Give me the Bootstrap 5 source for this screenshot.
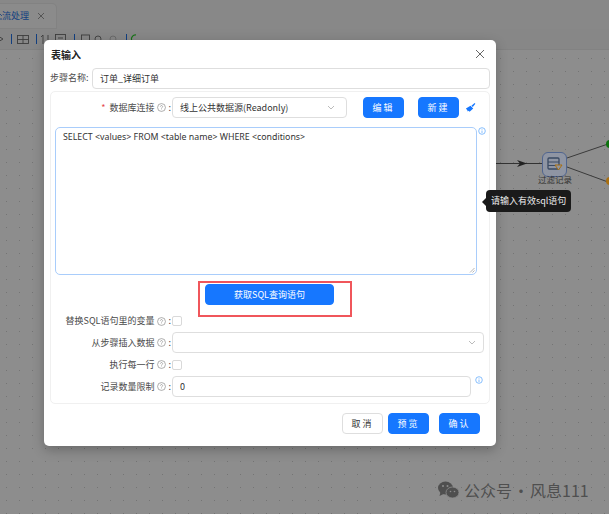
<!DOCTYPE html>
<html lang="zh"><head><meta charset="utf-8">
<link href="https://cdn.jsdelivr.net/npm/bootstrap@5.3.0/dist/css/bootstrap.min.css" rel="stylesheet">
<style>
html,body{width:609px;height:514px;overflow:hidden;margin:0}
body{font-family:"Noto Sans CJK SC","Liberation Sans",sans-serif;font-size:9px;color:#333;background:#8c8c8c}
.stage{position:relative;width:609px;height:514px;background-color:#8d8d8d;background-image:radial-gradient(#747474 .6px,transparent .8px);background-size:13px 13px;overflow:hidden}
.topbar{height:3px;background:#888}
.tabs{height:26px;background:#888;color:#123f80}
.tabs .tab{width:57px;height:26px;border:1px solid #828282;border-left:0;border-radius:0 5px 0 0;background:#8b8b8b;overflow:hidden}
.tools{height:21px;background:#878787;border-bottom:1px solid #828282}
.modal-box{position:absolute;left:44px;top:40px;width:452px;height:406px;background:#fff;border-radius:5px;padding:0 6px;box-shadow:0 4px 12px rgba(0,0,0,.25)}
.title{height:28px;font-size:10px;font-weight:700;color:#222;padding-top:7px;padding-left:1px}
.close-x{width:10px;height:10px;margin:2px 5px 0 0}
.fld{border:1px solid #dedede;border-radius:4px;background:#fff;height:21px;padding:0 7px;font-size:9px;color:#333;flex:none}
.lab{color:#4a4a4a;white-space:nowrap;font-size:9px}
.q{width:9px;height:9px;margin:0 2px 0 3px;flex:none}
.name-row{height:21px;margin-bottom:2px}
.name-row .lab{width:42px;flex:none;margin-top:-2px}
.panel{border:1px solid #f0f0f0;border-radius:5px;height:313px;padding:5px 0 0 4px}
.conn{height:21px;margin-bottom:9px}
.req{color:#e5484d;margin-right:4px}
.left{width:117px;flex:none;padding-right:1px}
.btn-x{--bs-btn-padding-y:0;--bs-btn-padding-x:0;--bs-btn-font-size:9px;--bs-btn-border-radius:4px;--bs-btn-bg:#1677ff;--bs-btn-border-color:#1677ff;height:21px;width:41px;letter-spacing:2px;line-height:1;flex:none}
.sql{width:422px;height:148px;border:1px solid #a9cdfb;border-radius:5px;font-family:"Noto Sans","Liberation Sans",sans-serif;font-size:8.8px;padding:3px 7px;color:#333;position:relative;flex:none}
.grip{position:absolute;right:1px;bottom:1px;width:6px;height:6px}
.hl{width:154px;height:36px;border:2px solid #f0565b;padding:1px 0 0 5px;margin:6px 0 0 143px}
.hl .btn{--bs-btn-bg:#1677ff;--bs-btn-border-color:#1677ff;--bs-btn-font-size:9px;--bs-btn-padding-y:0;--bs-btn-border-radius:4px;width:129px;height:21px;line-height:1}
.rc{height:10px;margin-top:-1px}
.rf{height:21px;margin-top:6px}
.cb{width:10px;height:10px;border:1px solid #d9d9d9;border-radius:2px;flex:none}
.rr{height:11px;margin-top:6px}
.btn-c{--bs-btn-padding-y:0;--bs-btn-padding-x:0;--bs-btn-font-size:9px;--bs-btn-border-radius:4px;--bs-btn-border-color:#dedede;--bs-btn-color:#333;height:21px;width:41px;letter-spacing:2px;line-height:1}
.node{position:absolute;left:542px;top:152px;width:25px;height:25px;background:#8f95a3;border:1px solid #50658f;border-radius:6px}
.nlabel{position:absolute;left:538px;top:173px;font-size:8.5px;color:#333}
.tip{position:absolute;left:486px;top:190px;height:22px;width:85px;background:#1a1a1a;color:#eee;font-size:9px;border-radius:4px;line-height:21px;padding-left:5px;white-space:nowrap}
.tip:before{content:"";position:absolute;left:-4px;top:8px;border:4px solid transparent;border-left:0;border-right-color:#1a1a1a}
.lines{position:absolute;left:0;top:0}
.wm{position:absolute;left:464px;top:479px;font-size:16px;color:#4f4f4f;line-height:22px;white-space:nowrap}
.wm .dot{margin:0 1px}
</style></head><body>
<div class="stage">
<div class="topbar"></div>
<div class="tabs d-flex"><div class="tab d-flex align-items-center justify-content-between"><span class="d-flex align-items-center text-nowrap"><svg class="flex-none" width="2" height="9" viewBox="0 0 2 9"><path d="M0 2l2 2M0 7h2" stroke="#123f80" stroke-width=".8"/></svg>流处理</span><svg style="margin-right:11px" width="8" height="8" viewBox="0 0 8 8"><path d="M1 1l6 6M7 1L1 7" stroke="#555"/></svg></div></div>
<div class="tools"><svg class="d-block" width="609" height="20" viewBox="0 30 609 20"><g fill="none" stroke="#3d3d3d" stroke-width=".9"><path d="M-2 37l5 3-5 3"/><rect x="17.500" y="36.500" width="11" height="8"/><path d="M17.500 40.500h11M23 36.500v8"/><path d="M43 45v-9l-2 2M48 36v9l2-2"/><rect x="55.500" y="35.500" width="10" height="9"/><path d="M58 39h5"/><rect x="81.500" y="36" width="8" height="8"/><circle cx="98" cy="40" r="3"/><circle cx="113" cy="40" r="3" stroke="#666"/></g><path d="M11.500 35v10M36.500 35v10M74.500 35v10M126.500 35v10" stroke="#123f80"/><path d="M136 36a4 4 0 1 0 2 7" fill="none" stroke="#157315" stroke-width="1.200"/></svg></div>
<svg class="lines" width="609" height="514"><path d="M496 163.500H542" stroke="#333" fill="none"/><path d="M527 163.500l-10-3.500 3 3.500-3 3.500z" fill="#222"/><path d="M567 158L608 144M567 167L608 182" stroke="#3b3b3b" fill="none"/><circle cx="610" cy="144" r="4" fill="#0d730d"/><circle cx="610" cy="181" r="4" fill="#a86f10"/></svg>
<div class="node"><svg class="d-block" width="23" height="23" viewBox="0 0 23 23"><rect x="5" y="5" width="11" height="11" rx="1" fill="none" stroke="#3a4a63" stroke-width="1.300"/><path d="M5 9h11M5 12.500h11" stroke="#3a4a63"/><path d="M12 12h7l-3.500 5z" fill="#8f95a3" stroke="#a86f10"/></svg></div>
<div class="nlabel">过滤记录</div>
<div class="wm"><svg class="position-absolute" style="left:-27px;top:2px" width="23" height="18" viewBox="0 0 22 18"><ellipse cx="8" cy="7" rx="7.500" ry="6.500" fill="#4f4f4f"/><path d="M3 11l-1 4 4-2z" fill="#4f4f4f"/><ellipse cx="15" cy="11.500" rx="6.500" ry="5.500" fill="#4f4f4f" stroke="#8d8d8d" stroke-width=".8"/><circle cx="5.500" cy="5" r="1" fill="#8d8d8d"/><circle cx="10" cy="5" r="1" fill="#8d8d8d"/><circle cx="13" cy="10.500" r=".8" fill="#8d8d8d"/><circle cx="17" cy="10.500" r=".8" fill="#8d8d8d"/></svg>公众号<span class="dot">·</span>风息111</div>

<div class="modal-box">
<div class="title d-flex justify-content-between align-items-start"><span>表输入</span><svg class="close-x" viewBox="0 0 10 10"><path d="M1 1l8 8M9 1l-8 8" stroke="#666"/></svg></div>
<div class="name-row d-flex align-items-center"><span class="lab">步骤名称:</span><div class="fld flex-grow-1 d-flex align-items-center">订单_详细订单</div></div>
<div class="panel">
 <div class="conn d-flex align-items-center">
  <div class="left d-flex align-items-center justify-content-end"><span class="req">*</span><span class="lab">数据库连接</span><svg class="q" viewBox="0 0 8 8"><circle cx="4" cy="4" r="3.500" fill="none" stroke="#888" stroke-width=".6"/><path d="M3 3.200a1 1 0 1 1 1.500.9c-.4.2-.5.4-.5.8M4 5.900v.4" fill="none" stroke="#888" stroke-width=".6"/></svg><span class="lab">:</span></div>
  <div class="fld d-flex align-items-center justify-content-between" style="width:175px"><span class="text-nowrap">线上公共数据源(Readonly)</span><svg width="8" height="5" viewBox="0 0 8 5" class="me-1"><path d="M1 1l3 3 3-3" fill="none" stroke="#bbb"/></svg></div>
  <button class="btn btn-primary btn-x" style="margin-left:16px">编辑</button>
  <button class="btn btn-primary btn-x" style="margin-left:14px">新建</button>
  <svg style="margin-left:6px" width="11" height="11" viewBox="0 0 12 12"><path d="M1 7l5-3 3 3-4 3.500-1-1-1 .8-.5-1.300z" fill="#1677ff"/><path d="M7 4l3.500-3 .8.8L8.500 5.500z" fill="#1677ff"/></svg>
 </div>
 <div class="d-flex align-items-start">
  <div class="sql">SELECT &lt;values&gt; FROM &lt;table name&gt; WHERE &lt;conditions&gt;<svg class="grip" viewBox="0 0 6 6"><path d="M5.500 1L1 5.500M5.500 3.500L3.500 5.500" stroke="#888" stroke-width=".6"/></svg></div>
  <svg class="flex-none" style="margin-left:1px" width="8" height="8" viewBox="0 0 8 8"><circle cx="4" cy="4" r="3.300" fill="none" stroke="#6aaefc" stroke-width=".8"/><path d="M4 3.500v2.500M4 2v.6" stroke="#6aaefc" stroke-width=".8"/></svg>
 </div>
 <div class="hl"><button class="btn btn-primary d-block">获取SQL查询语句</button></div>
 <div class="rc d-flex align-items-center">
  <div class="left d-flex align-items-center justify-content-end"><span class="lab">替换SQL语句里的变量</span><svg class="q" viewBox="0 0 8 8"><circle cx="4" cy="4" r="3.500" fill="none" stroke="#888" stroke-width=".6"/><path d="M3 3.200a1 1 0 1 1 1.500.9c-.4.2-.5.4-.5.8M4 5.900v.4" fill="none" stroke="#888" stroke-width=".6"/></svg><span class="lab">:</span></div>
  <div class="cb"></div>
 </div>
 <div class="rf d-flex align-items-center">
  <div class="left d-flex align-items-center justify-content-end"><span class="lab">从步骤插入数据</span><svg class="q" viewBox="0 0 8 8"><circle cx="4" cy="4" r="3.500" fill="none" stroke="#888" stroke-width=".6"/><path d="M3 3.200a1 1 0 1 1 1.500.9c-.4.2-.5.4-.5.8M4 5.900v.4" fill="none" stroke="#888" stroke-width=".6"/></svg><span class="lab">:</span></div>
  <div class="fld d-flex align-items-center justify-content-end" style="width:312px"><svg width="8" height="5" viewBox="0 0 8 5"><path d="M1 1l3 3 3-3" fill="none" stroke="#bbb"/></svg></div>
 </div>
 <div class="rr d-flex align-items-center">
  <div class="left d-flex align-items-center justify-content-end"><span class="lab">执行每一行</span><svg class="q" viewBox="0 0 8 8"><circle cx="4" cy="4" r="3.500" fill="none" stroke="#888" stroke-width=".6"/><path d="M3 3.200a1 1 0 1 1 1.500.9c-.4.2-.5.4-.5.8M4 5.900v.4" fill="none" stroke="#888" stroke-width=".6"/></svg><span class="lab">:</span></div>
  <div class="cb"></div>
 </div>
 <div class="rf d-flex align-items-center">
  <div class="left d-flex align-items-center justify-content-end"><span class="lab">记录数量限制</span><svg class="q" viewBox="0 0 8 8"><circle cx="4" cy="4" r="3.500" fill="none" stroke="#888" stroke-width=".6"/><path d="M3 3.200a1 1 0 1 1 1.500.9c-.4.2-.5.4-.5.8M4 5.900v.4" fill="none" stroke="#888" stroke-width=".6"/></svg><span class="lab">:</span></div>
  <div class="fld d-flex align-items-center" style="width:299px">0</div>
  <svg class="ms-1 align-self-start" width="8" height="8" viewBox="0 0 8 8"><circle cx="4" cy="4" r="3.300" fill="none" stroke="#6aaefc" stroke-width=".8"/><path d="M4 3.500v2.500M4 2v.6" stroke="#6aaefc" stroke-width=".8"/></svg>
 </div>
</div>
<div class="d-flex justify-content-end align-items-center" style="margin-top:9px;padding-right:10px">
 <button class="btn btn-c">取消</button>
 <button class="btn btn-primary btn-x" style="margin-left:5px">预览</button>
 <button class="btn btn-primary btn-x" style="margin-left:10px">确认</button>
</div>
</div>
<div class="tip">请输入有效sql语句</div>
</div>
</body></html>
